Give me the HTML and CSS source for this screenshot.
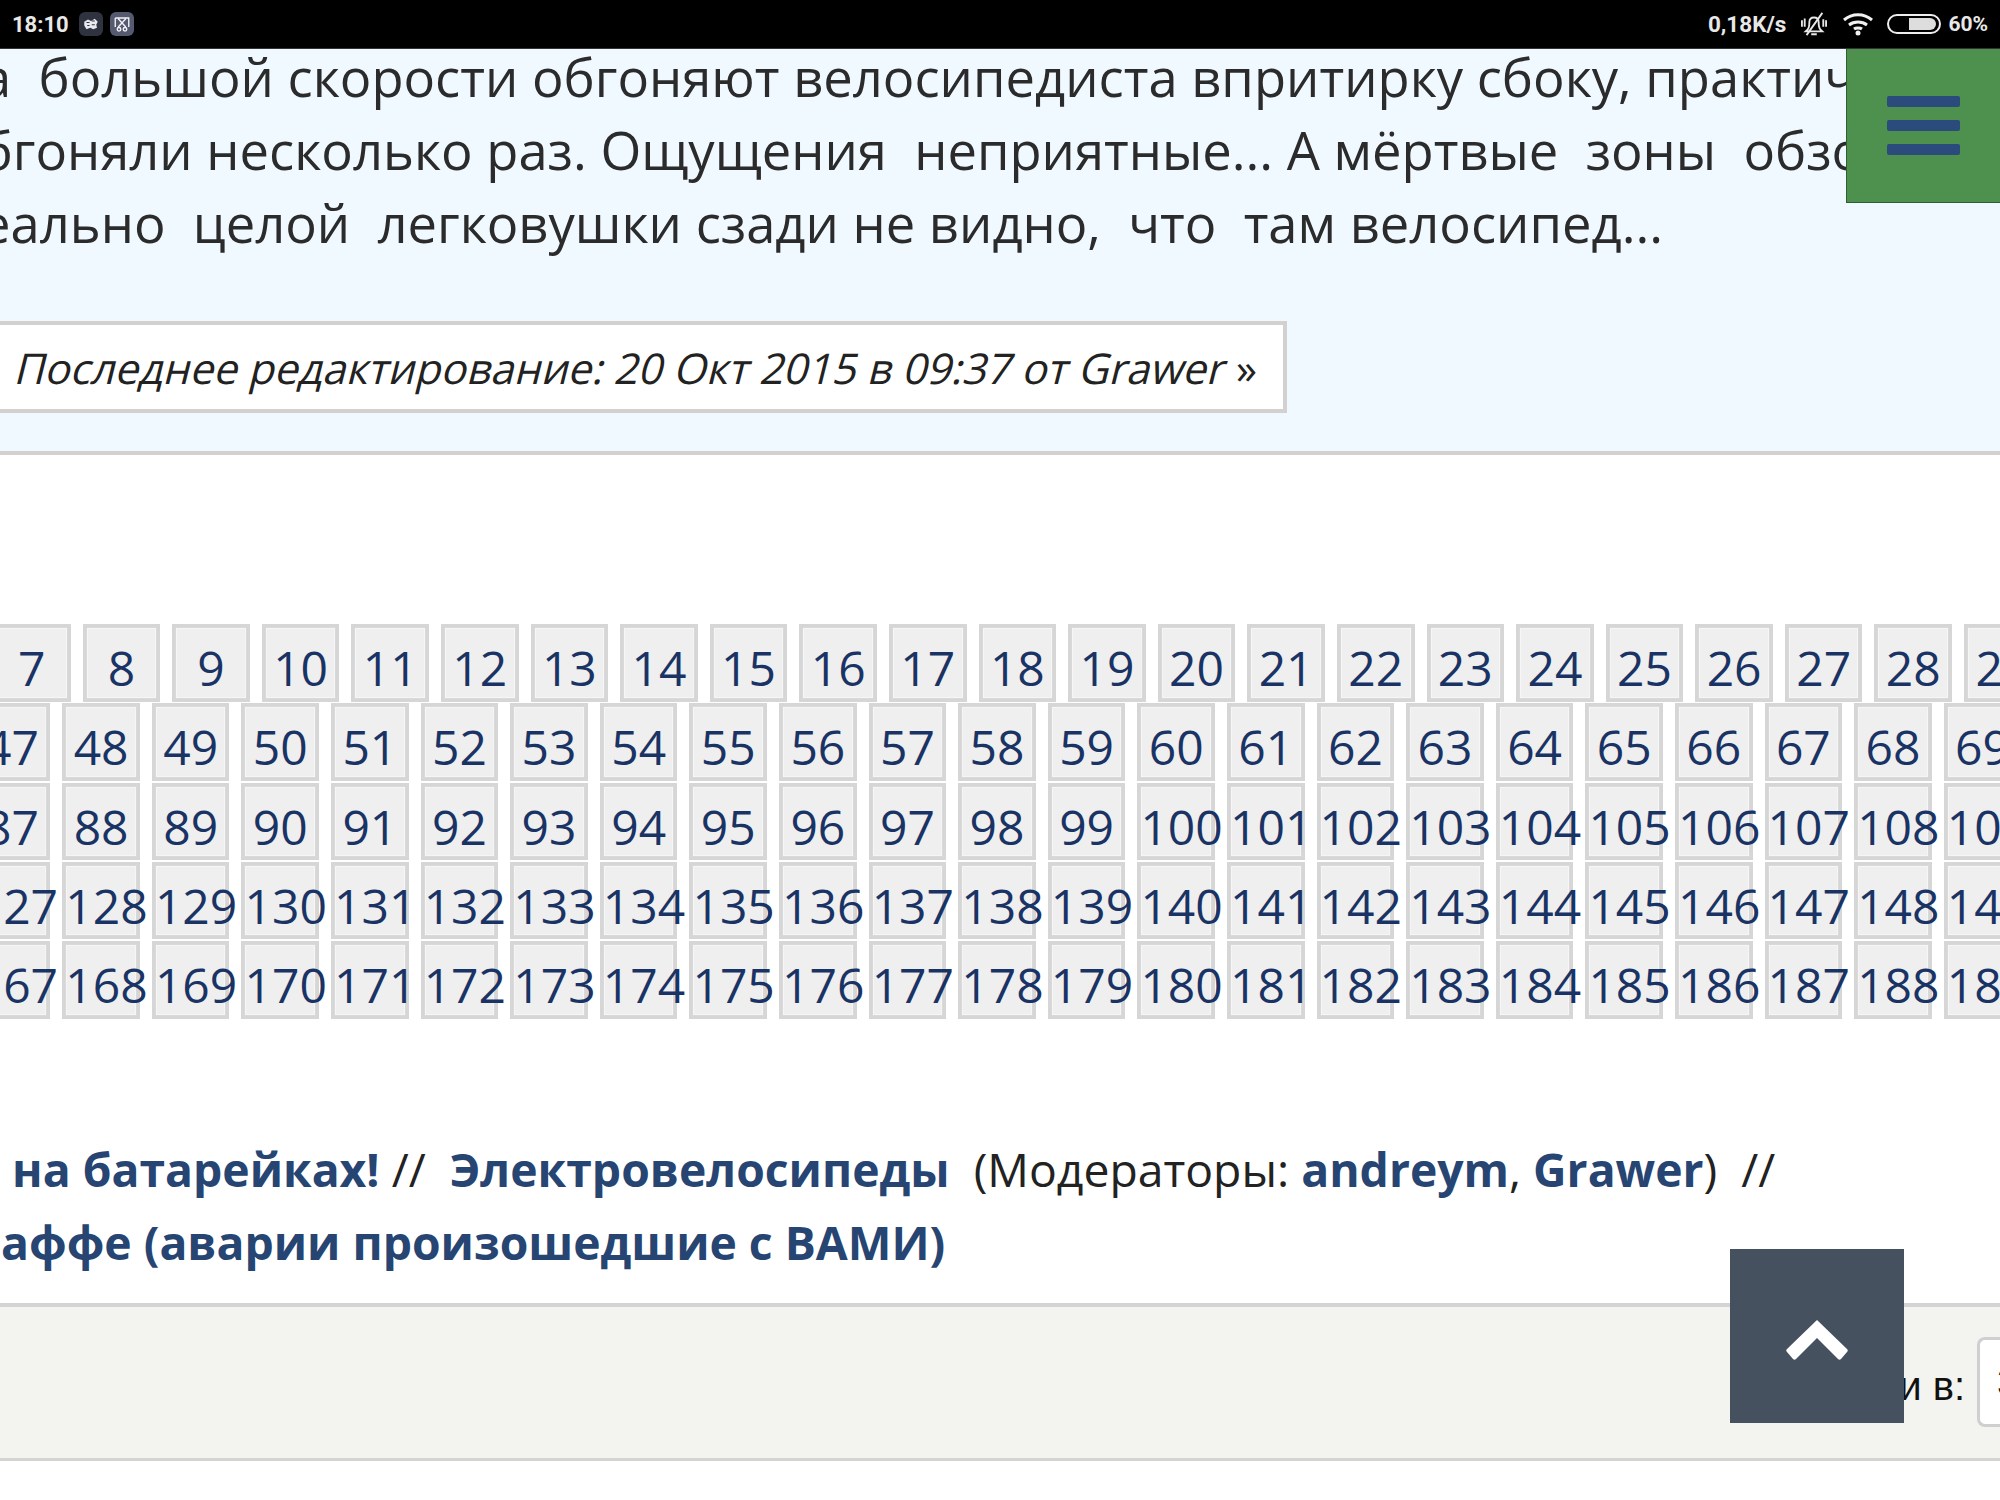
FILE: index.html
```html
<!DOCTYPE html>
<html lang="ru">
<head>
<meta charset="utf-8">
<title>Форум</title>
<link rel="stylesheet" href="styles.css">
</head>
<body>
<header class="status">
  <div class="status-left">
    <span class="time">18:10</span>
    <span class="app-icon app-dark"><svg viewBox="0 0 24 24" width="18" height="18"><path d="M3 9l5-3 4 2 5-3 4 4-2 4 1 4-5 2-4-2-5 2-3-5z" fill="#e8e8ee"/><path d="M6 10h4M13 8h4M7 14h3M13 13h4" stroke="#2e3342" stroke-width="1.6"/></svg></span>
    <span class="app-icon app-light"><svg viewBox="0 0 24 24" width="18" height="18" fill="none" stroke="#f2f2f6" stroke-width="1.8"><path d="M3 4h18v12M3 4v12M7 5l10 11M17 5L7 16"/><circle cx="8" cy="19" r="2.4"/><circle cx="16" cy="19" r="2.4"/></svg></span>
  </div>
  <div class="status-right">
    <span class="speed">0,18K/s</span>
    <svg class="ico-bell" viewBox="0 0 30 28" width="28" height="26" fill="none" stroke="#e8e8e8" stroke-width="2"><path d="M8 20c2-2 2-5 2-8 0-3 2-5 5-5s5 2 5 5c0 3 0 6 2 8l2 2H6z"/><path d="M12 25h6M24 2L7 26M2 10v7M5 8v9M25 9v8M28 10v7"/></svg>
    <svg class="ico-wifi" viewBox="0 0 32 24" width="32" height="24" fill="none" stroke="#f0f0f0" stroke-width="3"><path d="M2 8c8-7 20-7 28 0M7 13c5-4 13-4 18 0M12 17c2-1.500 6-1.500 8 0"/><circle cx="16" cy="21" r="2.500" fill="#f0f0f0" stroke="none"/></svg>
    <span class="battery"><span class="battery-fill"></span></span>
    <span class="percent">60%</span>
  </div>
</header>

<section class="post">
  <p class="line line-1">а&nbsp; большой скорости обгоняют велосипедиста впритирку сбоку, практически</p>
  <p class="line line-2">обгоняли несколько раз. Ощущения&nbsp; неприятные... А мёртвые&nbsp; зоны&nbsp; обзора</p>
  <p class="line line-3">реально&nbsp; целой&nbsp; легковушки сзади не видно,&nbsp; что&nbsp; там велосипед...</p>
  <div class="edited"><em class="slant">Последнее редактирование: 20 Окт 2015 в 09:37 от Grawer</em> »</div>
</section>

<nav class="pages">
  <div class="page-row row-first">
    <a class="cell">7</a><a class="cell">8</a><a class="cell">9</a><a class="cell">10</a><a class="cell">11</a><a class="cell">12</a><a class="cell">13</a><a class="cell">14</a><a class="cell">15</a><a class="cell">16</a><a class="cell">17</a><a class="cell">18</a><a class="cell">19</a><a class="cell">20</a><a class="cell">21</a><a class="cell">22</a><a class="cell">23</a><a class="cell">24</a><a class="cell">25</a><a class="cell">26</a><a class="cell">27</a><a class="cell">28</a><a class="cell">29</a>
  </div>
  <div class="page-row">
    <a class="cell">47</a><a class="cell">48</a><a class="cell">49</a><a class="cell">50</a><a class="cell">51</a><a class="cell">52</a><a class="cell">53</a><a class="cell">54</a><a class="cell">55</a><a class="cell">56</a><a class="cell">57</a><a class="cell">58</a><a class="cell">59</a><a class="cell">60</a><a class="cell">61</a><a class="cell">62</a><a class="cell">63</a><a class="cell">64</a><a class="cell">65</a><a class="cell">66</a><a class="cell">67</a><a class="cell">68</a><a class="cell">69</a>
  </div>
  <div class="page-row">
    <a class="cell">87</a><a class="cell">88</a><a class="cell">89</a><a class="cell">90</a><a class="cell">91</a><a class="cell">92</a><a class="cell">93</a><a class="cell">94</a><a class="cell">95</a><a class="cell">96</a><a class="cell">97</a><a class="cell">98</a><a class="cell">99</a><a class="cell">100</a><a class="cell">101</a><a class="cell">102</a><a class="cell">103</a><a class="cell">104</a><a class="cell">105</a><a class="cell">106</a><a class="cell">107</a><a class="cell">108</a><a class="cell">109</a>
  </div>
  <div class="page-row">
    <a class="cell">127</a><a class="cell">128</a><a class="cell">129</a><a class="cell">130</a><a class="cell">131</a><a class="cell">132</a><a class="cell">133</a><a class="cell">134</a><a class="cell">135</a><a class="cell">136</a><a class="cell">137</a><a class="cell">138</a><a class="cell">139</a><a class="cell">140</a><a class="cell">141</a><a class="cell">142</a><a class="cell">143</a><a class="cell">144</a><a class="cell">145</a><a class="cell">146</a><a class="cell">147</a><a class="cell">148</a><a class="cell">149</a>
  </div>
  <div class="page-row">
    <a class="cell">167</a><a class="cell">168</a><a class="cell">169</a><a class="cell">170</a><a class="cell">171</a><a class="cell">172</a><a class="cell">173</a><a class="cell">174</a><a class="cell">175</a><a class="cell">176</a><a class="cell">177</a><a class="cell">178</a><a class="cell">179</a><a class="cell">180</a><a class="cell">181</a><a class="cell">182</a><a class="cell">183</a><a class="cell">184</a><a class="cell">185</a><a class="cell">186</a><a class="cell">187</a><a class="cell">188</a><a class="cell">189</a>
  </div>
</nav>

<div class="crumbs">
  <p class="crumb-1"><a>на батарейках!</a> //&nbsp; <a>Электровелосипеды</a>&nbsp; (Модераторы: <a>andreym</a>, <a>Grawer</a>)&nbsp; //</p>
  <p class="crumb-2"><a>аффе (аварии произошедшие с ВАМИ)</a></p>
</div>

<footer class="bar">
  <span class="bar-label">и в:</span>
  <span class="bar-input">3</span>
</footer>

<button class="menu-btn" aria-label="Меню"><span></span><span></span><span></span></button>
<button class="top-btn" aria-label="Наверх"><svg viewBox="0 0 66 44" width="66" height="44"><path d="M33 2L63 31c1 1 1 2 0 3l-6 7c-1 1-2 1-3 0L33 20 12 41c-1 1-2 1-3 0l-6-7c-1-1-1-2 0-3z" fill="#fff"/></svg></button>
</body>
</html>
```

FILE: styles.css
```css
* { box-sizing: border-box; }
html, body { margin: 0; padding: 0; }
body {
  width: 2000px;
  height: 1500px;
  overflow: hidden;
  position: relative;
  background: #fff;
  font-family: "Open Sans", sans-serif;
  color: #2b2b2b;
}
p { margin: 0; }

.status {
  height: 48px;
  background: #000;
  color: #e8e8e8;
  display: flex;
  justify-content: space-between;
  align-items: center;
  padding: 0 12px;
  font-family: Roboto, sans-serif;
  font-weight: 700;
  font-size: 21px;
}
.status-left, .status-right { display: flex; align-items: center; }
.time { margin-right: 10px; font-size: 22px; }
.app-icon {
  width: 24px;
  height: 24px;
  border-radius: 6px;
  display: flex;
  align-items: center;
  justify-content: center;
  margin-right: 7px;
}
.app-dark { background: #2f3340; }
.app-light { background: #555a70; }
.speed { margin-right: 14px; font-size: 22.5px; }
.ico-bell { margin-right: 14px; }
.ico-wifi { margin-right: 13px; }
.battery {
  width: 54px;
  height: 20px;
  border: 2px solid #eee;
  border-radius: 10px;
  padding: 2px 3px;
  display: flex;
  justify-content: flex-end;
  margin-right: 7px;
}
.battery-fill { width: 27px; background: #ddd; border-radius: 0 6px 6px 0; }

.post {
  height: 407px;
  background: #eff9ff;
  border-top: 1px solid #333;
  border-bottom: 4px solid #d3d1d0;
  overflow: hidden;
}
.line {
  font-size: 52.5px;
  line-height: 73px;
  white-space: nowrap;
}
.line-1 { margin-left: -18px; margin-top: -9px; }
.line-2 { margin-left: -50px; }
.line-3 { margin-left: -51px; }
.edited {
  width: 1287px;
  height: 92px;
  margin-top: 62px;
  background: #fff;
  border: 4px solid #d3d1d0;
  border-left: 0;
  padding-left: 17px;
  font-size: 42.4px;
  line-height: 86px;
  white-space: nowrap;
  color: #222;
}
.slant {
  display: inline-block;
  font-style: normal;
  margin-right: -2px;
  transform: skewX(-14deg);
}

.pages {
  margin-top: 169px;
  display: flex;
  flex-direction: column;
  gap: 1.7px;
  font-size: 48px;
}
.page-row {
  display: flex;
  gap: 12px;
  margin-left: -27.3px;
}
.row-first { margin-left: -7px; }
.cell {
  display: block;
  flex: 0 0 77.6px;
  min-width: 0;
  height: 77.6px;
  background: #efefef;
  border: 3px solid #d6d6d6;
  box-shadow: inset 0 0 0 1px #d9d9d9, inset 0 0 0 2px #f6f6f6;
  padding-top: 11px;
  text-align: center;
  color: #1a3365;
  line-height: 60.6px;
  white-space: nowrap;
}

.crumbs {
  margin-top: 114px;
  font-size: 46.3px;
  line-height: 73px;
  white-space: nowrap;
  color: #222;
}
.crumbs a { font-weight: 700; color: #264572; }
.crumb-1 { margin-left: 12px; }
.crumb-2 { margin-left: 1px; }

.bar {
  margin-top: 24px;
  height: 158px;
  background: #f3f4ef;
  border-top: 4px solid #d4d4d4;
  border-bottom: 3px solid #d4d4d4;
  display: flex;
  justify-content: flex-end;
  align-items: center;
  overflow: hidden;
}
.bar-label {
  font-family: "Liberation Sans", sans-serif;
  font-size: 40px;
  color: #111;
  margin-right: 12px;
  padding-top: 8px;
}
.bar-input {
  flex: 0 0 23px;
  height: 90px;
  background: #fff;
  border: 3px solid #cfcfcf;
  border-right: 0;
  border-radius: 8px 0 0 8px;
  padding-left: 17px;
  font-family: "Liberation Sans", sans-serif;
  font-size: 40px;
  line-height: 84px;
  color: #111;
  overflow: hidden;
}

.menu-btn {
  position: absolute;
  right: 0;
  top: 49px;
  width: 154px;
  height: 154px;
  background: #4e914e;
  border: 0;
  border-bottom: 1px solid #2f5e2f;
  border-left: 1px solid #2f5e2f;
  padding: 47px 40px 0 40px;
  display: flex;
  flex-direction: column;
  gap: 13px;
}
.menu-btn span {
  display: block;
  width: 73px;
  height: 11px;
  background: #2a4b7c;
  border-radius: 2px;
}
.top-btn {
  position: absolute;
  left: 1730px;
  top: 1249px;
  width: 174px;
  height: 174px;
  background: #45515f;
  border: 0;
  padding: 8px 0 0;
  display: flex;
  align-items: center;
  justify-content: center;
}
```
